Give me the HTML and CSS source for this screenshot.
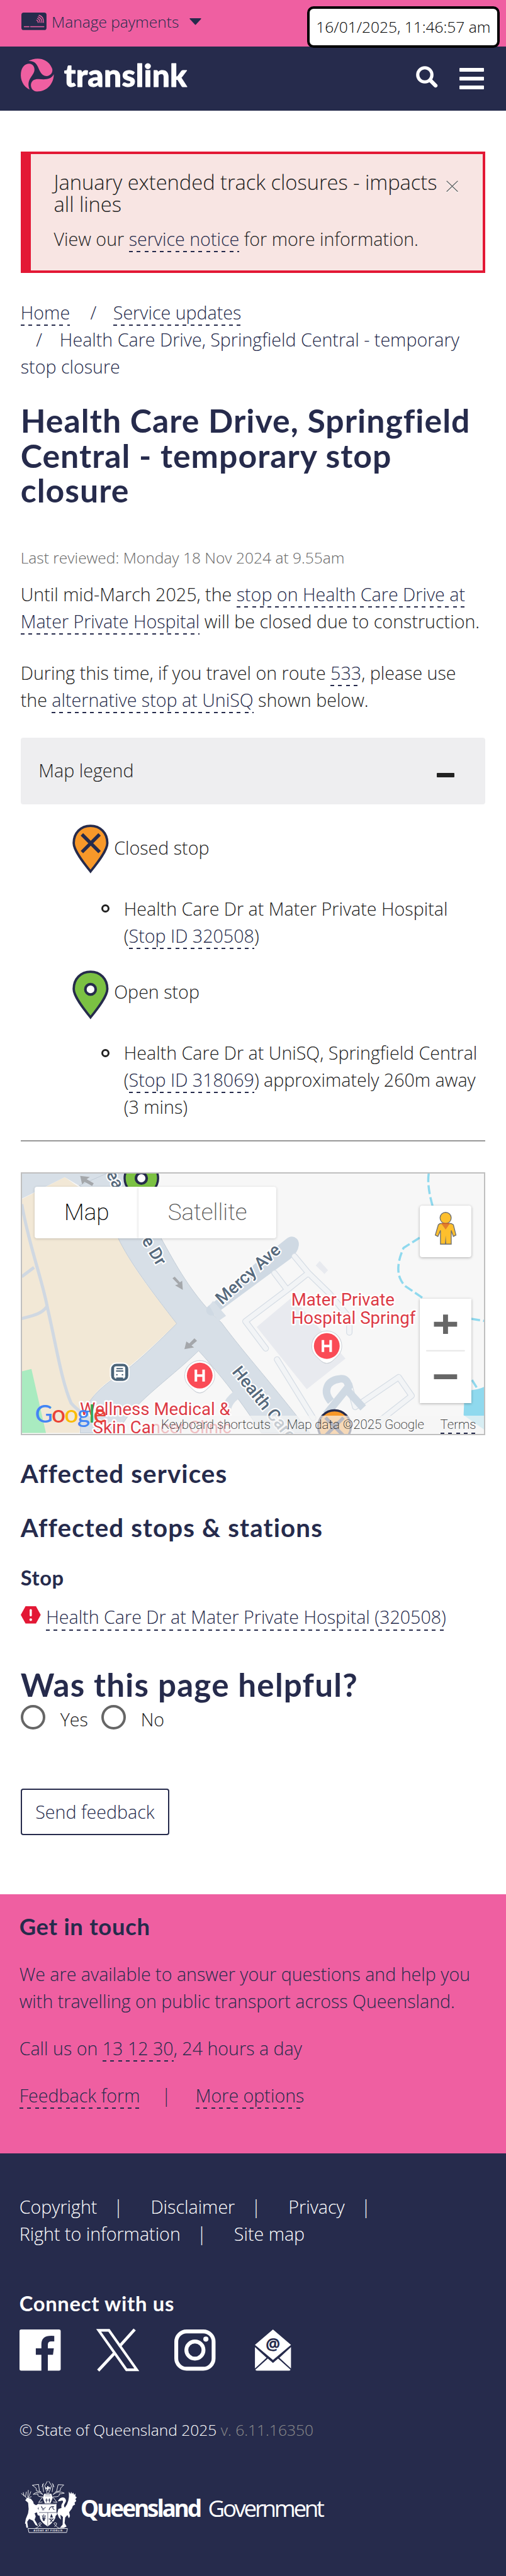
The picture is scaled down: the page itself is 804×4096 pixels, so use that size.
FILE: index.html
```html
<!DOCTYPE html>
<html lang="en">
<head>
<meta charset="utf-8">
<title>Health Care Drive, Springfield Central - temporary stop closure | Translink</title>
<link rel="stylesheet" href="styles.css">
</head>
<body>
<div class="topbar">
  <svg class="card-icon" viewBox="0 0 175 122"><rect width="175" height="122" rx="16" fill="#262b4c"/><g fill="none" stroke="#ef5fa1" stroke-width="6.5" stroke-linecap="round"><path d="M20 99H53M64 99H157"/><path d="M107 53q10 4 10 16M112 41q18 6 18 28M117 30q26 8 26 39M123 19q32 9 31 50"/></g></svg>
  <span class="topbar-text">Manage payments</span>
  <svg class="caret" viewBox="0 0 84 47"><path d="M5 3H79L42 43Z" fill="#262b4c" stroke="#262b4c" stroke-width="7" stroke-linejoin="round"/></svg>
  <div class="clock">16/01/2025, 11:46:57 am</div>
</div>
<header class="header">
  <svg class="logo" viewBox="144 411 1170 232">
    <g fill="#ef5fa1"><path d="M198 429C250 400 330 405 362 478C374 505 352 534 323 534C255 528 285 424 198 429Z"/><path d="M206 629C160 605 140 560 145 512C150 468 175 447 202 447C228 448 244 470 239 498C228 540 180 560 206 629Z"/><path d="M375 521C375 585 330 642 258 642C228 640 213 617 215 592C220 562 242 554 270 555C315 559 355 560 375 521Z"/></g>
    <text class="logo-text" x="446" y="608" textLength="860">translink</text>
  </svg>
  <svg class="search" viewBox="0 0 50 50"><circle cx="20.500" cy="20.500" r="16.500" fill="none" stroke="#fff" stroke-width="7.500"/><path d="M33 33L45.500 45.500" stroke="#fff" stroke-width="9" stroke-linecap="round"/></svg>
  <div class="burger"><i></i><i></i><i></i></div>
</header>

<main class="main">
  <section class="alert">
    <div>
      <p class="alert-title">January extended track closures - impacts<br>all lines</p>
      <p class="alert-body">View our <a>service notice</a> for more information.</p>
    </div>
    <svg class="close" viewBox="0 0 28 28"><path d="M1 3L27 28M27 3L1 28" stroke="#fff" stroke-width="2"/><path d="M1 1L27 26M27 1L1 26" stroke="#666" stroke-width="2"/></svg>
  </section>

  <nav class="crumbs"><a>Home</a><span class="slash">/</span><a>Service updates</a><br><span class="slash slash-first">/</span>Health Care Drive, Springfield Central - temporary<br>stop closure</nav>

  <h1>Health Care Drive, Springfield<br>Central - temporary stop<br>closure</h1>
  <p class="reviewed">Last reviewed: Monday 18 Nov 2024 at 9.55am</p>
  <p class="para">Until mid-March 2025, the <a>stop on Health Care Drive at</a><br><a>Mater Private Hospital</a> will be closed due to construction.</p>
  <p class="para para-second">During this time, if you travel on route <a>533</a>, please use<br>the <a>alternative stop at UniSQ</a> shown below.</p>

  <div class="legend-head"><span>Map legend</span><i class="minus"></i></div>
  <div class="legend">
    <div class="stop">
      <svg class="pin" viewBox="0 0 84 112"><path d="M42 3C19 3 3 20 3 43C3 60 25 88 42 109C59 88 81 60 81 43C81 20 65 3 42 3Z" fill="#f89829" stroke="#262b4c" stroke-width="5.500"/><path d="M22 23L63 64M63 23L22 64" stroke="#262b4c" stroke-width="8"/></svg>
      <span>Closed stop</span>
    </div>
    <div class="detail"><i class="ring"></i><p>Health Care Dr at Mater Private Hospital<br>(<a>Stop ID 320508</a>)</p></div>
    <div class="stop stop-open">
      <svg class="pin" viewBox="0 0 84 112"><path d="M42 3C19 3 3 20 3 43C3 60 25 88 42 109C59 88 81 60 81 43C81 20 65 3 42 3Z" fill="#7bc143" stroke="#262b4c" stroke-width="5.500"/><circle cx="42" cy="44" r="12" fill="#fff" stroke="#262b4c" stroke-width="6"/></svg>
      <span>Open stop</span>
    </div>
    <div class="detail"><i class="ring"></i><p>Health Care Dr at UniSQ, Springfield Central<br>(<a>Stop ID 318069</a>) approximately 260m away<br>(3 mins)</p></div>
  </div>

  <div class="map">
    <svg class="map-art" viewBox="51 37 1077 606" preserveAspectRatio="none">
      <rect x="51" y="37" width="1077" height="606" fill="#f7f7f7"/>
      <g transform="scale(.7519 .43367)">
        <path d="M65 225L200 105L245 160L330 430H365C400 560 450 680 547 892C480 1000 440 1070 380 1150C310 1230 265 1280 245 1480H65Z" fill="#f2e8d6"/>
        <path d="M65 1150L97 1136L142 1480H65Z" fill="#a9ebc0"/>
        <path d="M65 85H400V150H245L200 105L65 222Z" fill="#d7dfe7"/>
        <path d="M330 85H400C440 250 500 440 540 560C600 740 650 830 685 885C760 1060 850 1230 960 1480H810C770 1370 700 1200 615 1038C520 1200 400 1330 365 1480H248C250 1340 290 1250 385 1150C440 1075 490 990 547 892C470 720 400 560 365 430C340 330 300 200 245 150Z" fill="#d7dfe7" stroke="#c2ccd6" stroke-width="1" vector-effect="non-scaling-stroke"/>
        <path d="M700 1390C700 1330 710 1300 740 1265" fill="none" stroke="#d7dfe7" stroke-width="14" vector-effect="non-scaling-stroke"/>
        <path vector-effect="non-scaling-stroke" d="M67 250C90 480 130 650 147 810C175 1020 190 1200 220 1320Q235 1350 260 1380M67 640L105 590M67 865C100 850 130 840 145 800" fill="none" stroke="#d0d8e2" stroke-width="5"/>
        <path vector-effect="non-scaling-stroke" d="M655 820L890 520C915 480 912 445 900 455L795 600" fill="none" stroke="#cfd9e3" stroke-width="17" stroke-linejoin="round" stroke-linecap="round"/>
        <path d="M648 795L675 880L700 850L660 770Z" fill="#d7dfe7"/>
        <path d="M795 910L905 750L1070 1080L950 1245Z" fill="#e8eaef"/>
        <path d="M978 580L990 555L1016 605L1005 625Z" fill="#e8eaef"/>
        <g fill="none" stroke="#d6dde5" stroke-width="10" stroke-linejoin="round" stroke-linecap="round">
          <path vector-effect="non-scaling-stroke" d="M912 530L955 620L1020 730L1082 860V940M955 620L890 710L760 880L823 1025M850 620L885 700M1082 1220L1100 1340L1235 1180L1275 1280L1150 1450M858 1085L970 1400"/></g>
        <g fill="none" stroke="#f2f4f6" stroke-width="7.500" stroke-linejoin="round" stroke-linecap="round">
          <path vector-effect="non-scaling-stroke" d="M912 530L955 620L1020 730L1082 860V940M955 620L890 710L760 880L823 1025M850 620L885 700M1082 1220L1100 1340L1235 1180L1275 1280L1150 1450M858 1085L970 1400"/></g>
        <path vector-effect="non-scaling-stroke" d="M1010 1380L1080 1230Q1075 1180 1050 1190C1010 1200 1000 1260 1025 1310M1070 1240L1125 1345" fill="none" stroke="#cfd9e3" stroke-width="12"/>
        <path vector-effect="non-scaling-stroke" d="M1328 85Q1322 150 1340 260M1300 430L1250 485Q1215 620 1255 690L1310 755M1460 866L1502 878M1462 1195L1480 1245" fill="none" stroke="#8fd9ee" stroke-width="3.500" stroke-dasharray="14 5"/>
        <path d="M1438 1300L1460 1250Q1480 1248 1502 1230V1465Q1450 1400 1436 1384Z" fill="#8fd9ee"/>
        <g fill="#a4a7ab"><path d="M248 98L278 104L268 116L290 138L285 152L262 130L254 144Z"/><path d="M566 711L542 686L552 680L534 648L541 640L557 670L564 662Z"/><path d="M571 1029L577 988L586 999L602 971L610 985L593 1010L601 1020Z"/></g>
      </g>
      <g class="road">
        <text x="246" y="38" transform="rotate(62 246 38)">ea</text>
        <text x="329" y="193" transform="rotate(59 329 193)">e Dr</text>
        <text x="517" y="344" transform="rotate(-42 517 344)">Mercy Ave</text>
        <text x="539" y="500" transform="rotate(51 539 500)">Health Care</text>
      </g>
      <g class="poi">
        <text x="678" y="345.500">Mater Private</text>
        <text x="678" y="387.500">Hospital Springf</text>
        <text x="186" y="600">Wellness Medical &amp;</text>
        <text x="216" y="642">Skin Cancer Clinic</text>
      </g>
      <g id="hospital"><path d="M761 440a35.500 35.500 0 0 1 35 35c0 17-10 24-22 35q-13 11-26 0c-12-11-22-18-22-35a35.500 35.500 0 0 1 35-35Z" fill="#fff" stroke="#cdd2d8" stroke-width="1.500" transform="translate(0 -36)"/><circle cx="761" cy="439" r="30" fill="#fa4b56"/><path d="M752 425V453M770 425V453M752 439H770" stroke="#fff" stroke-width="6"/></g>
      <use href="#hospital" x="-296" y="69"/>
      <rect x="257" y="479" width="43" height="43" rx="14" fill="#4a6378" stroke="#fff" stroke-width="3"/><path d="M270 488h17q3 0 3 3v20h-23v-20q0-3 3-3Z M269 509v6M288 509v6" fill="#fff" stroke="#fff" stroke-width="3"/><path d="M271 492h15M270 497.500h17" stroke="#4a6378" stroke-width="3"/><circle cx="272" cy="506" r="1.800" fill="#4a6378"/><circle cx="285" cy="506" r="1.800" fill="#4a6378"/>
      <circle cx="329" cy="48" r="39" fill="#7bc143" stroke="#262b4c" stroke-width="5"/><circle cx="329" cy="48" r="12.500" fill="#fff" stroke="#262b4c" stroke-width="6"/>
      <circle cx="779" cy="627" r="38" fill="#f89829" stroke="#262b4c" stroke-width="5"/><path d="M758 606L800 648M800 606L758 648" stroke="#262b4c" stroke-width="8"/>
      <text class="google" x="81" y="617" textLength="167"><tspan fill="#4285f4">G</tspan><tspan fill="#ea4335">o</tspan><tspan fill="#fbbc05">o</tspan><tspan fill="#4285f4">g</tspan><tspan fill="#34a853">l</tspan><tspan fill="#ea4335">e</tspan></text>
    </svg>
    <div class="map-type"><span class="type-map">Map</span><span class="type-sat">Satellite</span></div>
    <div class="pegman"><svg viewBox="0 0 50 76"><g fill="#fdbf2d" stroke="#707070" stroke-width="2"><path d="M12 27H38L43 30L49 54L43 57L38 43V75H13V43L7 57L1 54L8 30Z"/><circle cx="25" cy="14" r="13"/></g><path d="M15 27H35L25 41Z" fill="#e27f2c"/><path d="M16 27H34" stroke="#d05a20" stroke-width="2"/><path d="M25 55L23.500 75H26.500Z" fill="#707070"/></svg></div>
    <div class="zoom"><svg viewBox="0 0 120 243"><path d="M33 59.500H87M60 37V82M33 182H87" stroke="#666" stroke-width="11.500" fill="none"/><path d="M15 121.500H105" stroke="#e6e6e6" stroke-width="3"/></svg></div>
    <div class="map-foot"><span>Keyboard shortcuts</span><span>Map data ©2025 Google</span><a>Terms</a></div>
  </div>

  <h2 class="affected">Affected services</h2>
  <h2 class="affected stations">Affected stops &amp; stations</h2>
  <h3>Stop</h3>
  <p class="stop-link"><svg class="warn" viewBox="0 0 46 40"><path d="M11 0H35L46 20L35 40H11L0 20Z" fill="#e31835"/><path d="M23 9V21" stroke="#fff" stroke-width="5" stroke-linecap="round"/><circle cx="23" cy="31" r="3" fill="#fff"/></svg><a>Health Care Dr at Mater Private Hospital (320508)</a></p>

  <h2 class="helpful">Was this page helpful?</h2>
  <div class="radios"><i></i><span>Yes</span><i></i><span>No</span></div>
  <div class="feedback">Send feedback</div>
</main>

<section class="touch">
  <h2>Get in touch</h2>
  <p>We are available to answer your questions and help you<br>with travelling on public transport across Queensland.</p>
  <p>Call us on <a>13 12 30</a>, 24 hours a day</p>
  <p class="touch-links"><a>Feedback form</a><span>|</span><a>More options</a></p>
</section>

<footer class="footer">
  <div class="links"><span>Copyright</span><b>|</b><span>Disclaimer</span><b>|</b><span>Privacy</span><b>|</b></div>
  <div class="links"><span>Right to information</span><b>|</b><span>Site map</span></div>
  <h2>Connect with us</h2>
  <div class="social">
    <svg viewBox="0 0 96 96"><path d="M4 0H92Q96 0 96 4V92Q96 96 92 96H66V59H78L80 44H66V36Q66 28 74 28H81V15Q51 12 51 34V44H38V59H51V96H4Q0 96 0 92V4Q0 0 4 0Z" fill="#fff"/></svg>
    <svg viewBox="0 0 96 96"><path d="M4 2H28L93 94H69Z" fill="none" stroke="#fff" stroke-width="6"/><path d="M88 0L52 40M42 54L3 96" stroke="#fff" stroke-width="7"/></svg>
    <svg viewBox="0 0 96 96"><rect x="4.500" y="4.500" width="87" height="87" rx="24" fill="none" stroke="#fff" stroke-width="9"/><circle cx="48" cy="48" r="20" fill="none" stroke="#fff" stroke-width="9"/><circle cx="73.500" cy="22.500" r="6" fill="#fff"/></svg>
    <svg viewBox="0 0 96 96"><path d="M48 0L90 36L48 71L6 36ZM6 41L33 66L6 91ZM90 41L63 66L90 91ZM36 68L48 78L60 68L89 94Q88 96 86 96H10Q8 96 7 94Z" fill="#fff"/><text class="at" x="48" y="48" text-anchor="middle">@</text></svg>
  </div>
  <p class="copy">© State of Queensland 2025 <span>v. 6.11.16350</span></p>
  <div class="gov">
    <svg class="crest" viewBox="53 38 396 370">
      <g fill="#fff">
        <path d="M84 178L98 160L124 168L140 188L144 204L160 214L176 204L184 218L172 236L186 260L184 288L172 284L166 264L150 270L158 292L150 316L166 342L174 362L156 352L138 322L112 310L98 330L104 372H92L88 346L82 342L88 310L104 270L108 240L104 196Z"/>
        <path d="M314 186Q330 152 360 160Q382 176 362 204Q352 220 364 230Q398 190 392 118L404 134L408 118L416 134L422 124L430 140L438 130L438 150L448 158L438 170L444 184L432 196L436 208L420 218L414 236L394 262L400 290L392 306L382 282L366 300L362 340L376 364L356 374H328L348 350L350 296L332 280L336 316L322 300L310 270L318 240L340 232Q334 212 350 194Q354 176 336 182Z"/>
        <path d="M178 202H304V262L310 276L298 290Q300 320 242 364Q184 326 186 290L178 276Z"/>
        <path d="M218 132H268L278 160L262 200H222L208 160Z"/>
        <path d="M240 78l8 0-1 10 12-4v14l-12-2 1 14h-10l1-14-14 4V86l14 4Z"/>
      </g>
      <g fill="none" stroke="#fff" stroke-width="4"><path d="M240 44L222 76L240 132M250 44L270 76L248 132M206 64L214 120M282 64L274 120M214 58L202 84M274 58L288 84M134 72L160 92L164 112L196 118M134 72L178 66L184 112L208 138M356 70L334 92L330 112L300 118M356 70L316 68L306 112L280 138M208 138Q170 108 140 136L174 134Q166 156 208 154M280 138Q320 108 360 128L324 134Q332 156 280 154M206 156L178 194L206 190M280 156L308 194L280 190"/>
        <path d="M56 130L84 152L96 166M70 122L76 150M92 118L86 154M106 106L102 158M124 116L114 142L104 162M128 152L106 162"/>
        <path d="M104 378H382L376 406H110ZM152 378Q176 374 198 342Q190 330 180 342Q178 352 196 366M332 378Q308 374 286 342Q294 330 306 342Q308 352 290 366"/></g>
      <g fill="none" stroke="#262b4c"><path d="M182 265H302M243 265V360M182 206H300" stroke-width="3"/><path d="M198 220q6 30 30 8M202 246h16M252 248q6-30 32-24q-16 8 6 22M234 166v28M226 177h16M254 166v28M246 177h16M204 284l8 40M215 278v46M226 284l-8 40M204 308h24M258 312l20 22M278 312l-20 22M250 310h36" stroke-width="4.500"/><path d="M226 138h34M222 148h42" stroke-width="2"/></g>
      <path d="M260 300L268 274L280 300Z" fill="#262b4c"/>
      <text class="motto" x="142" y="399" textLength="204">AUDAX AT FIDELIS</text>
    </svg>
    <svg class="gov-name" viewBox="0 0 570 60"><text y="48"><tspan class="qld" textLength="283">Queensland</tspan><tspan class="govt" x="297" textLength="272">Government</tspan></text></svg>
  </div>
</footer>
</body>
</html>
```
FILE: styles.css
```css
/* 1rem is ten layout pixels of the 393px wide mobile page */
html { font-size: 20.458px; }
body { margin: 0; width: 39.3rem; background: #fff; color: #222; font: 300 1.4rem/2.1rem "Open Sans", "Noto Sans", sans-serif; white-space: nowrap; overflow-x: hidden; }
*, *::before { box-sizing: border-box; }
p, h1, h2, h3 { margin: 0; }
svg { display: block; flex: none; overflow: visible; }
a { color: #262b4c; padding-bottom: 2px; background: repeating-linear-gradient(90deg, #262b4c 0 6px, transparent 6px 12.270px) left bottom / 100% 2px no-repeat; }
h1, h2, h3 { color: #262b4c; font-family: Lato, sans-serif; font-weight: 700; }

.topbar { height: 3.6rem; background: #ef5fa1; display: flex; align-items: flex-start; padding: .97rem 0 0 1.64rem; position: relative; color: #262b4c; font-size: 1.2rem; line-height: 1.8rem; }
.card-icon { width: 1.95rem; height: 1.36rem; }
.topbar-text { margin-left: .42rem; margin-top: -.12rem; }
.caret { width: .93rem; height: .52rem; margin: .43rem 0 0 .8rem; }
.clock { position: absolute; top: .5rem; left: 23.85rem; width: 14.95rem; height: 3.2rem; background: #fff; border: .2rem solid #000; border-radius: .5rem; color: #000; font-size: 1.2rem; line-height: 2.8rem; text-align: center; z-index: 2; }

.header { height: 5rem; background: #262b4c; display: flex; align-items: flex-start; padding-left: 1.6rem; }
.logo { width: 13rem; height: 2.58rem; margin-top: .97rem; }
.logo-text { font: 900 218px Lato, sans-serif; fill: #fff; stroke: #fff; stroke-width: 4; stroke-linejoin: round; }
.search { width: 1.67rem; height: 1.67rem; margin: 1.54rem 0 0 17.73rem; }
.burger { width: 1.9rem; margin: 1.66rem 0 0 1.67rem; display: flex; flex-direction: column; gap: .38rem; }
.burger i { height: .31rem; background: #fff; border-radius: 1px; }

.main { padding: 3.2rem 1.6rem 4.63rem; }
.alert { height: 9.4rem; background: #f8e5e3; border: .2rem solid #e31835; border-left-width: .8rem; padding: 1.37rem 1.93rem 0 1.8rem; display: flex; justify-content: space-between; align-items: flex-start; }
.alert-title { font-size: 1.6rem; line-height: 1.7rem; letter-spacing: -.003rem; }
.alert-body { margin-top: .8rem; }
.close { width: .93rem; height: .93rem; margin-top: .65rem; }

.crumbs { margin-top: 2.05rem; color: #262b4c; }
.slash { margin: 0 1.3rem 0 1.58rem; }
.slash-first { margin: 0 1.36rem 0 1.2rem; }
h1 { font-size: 2.53rem; line-height: 2.7rem; margin-top: 1.8rem; letter-spacing: .05rem; }
.reviewed { margin-top: 3.04rem; font-size: 1.2rem; line-height: 1.8rem; color: #666; }
.para { margin-top: .87rem; }
.para-second { margin-top: 1.92rem; }

.legend-head { margin-top: 1.84rem; height: 5.2rem; background: #eeeef0; border-radius: .2rem; padding: 0 2.4rem 0 1.4rem; display: flex; align-items: center; justify-content: space-between; line-height: 2.1rem; }
.minus { width: 1.38rem; height: .34rem; margin-top: .68rem; background: #222; border-radius: 1px; }
.legend { border-bottom: 2px solid #979797; padding: 1.58rem 0 1.54rem 4rem; }
.stop { display: flex; gap: .44rem; }
.stop span { padding-top: .76rem; }
.stop-open { margin-top: 1.62rem; }
.stop-open span { padding-top: .64rem; }
.pin { width: 2.82rem; height: 3.75rem; }
.detail { display: flex; margin-top: 1.74rem; padding-left: 2.25rem; gap: 1.13rem; }
.stop-open + .detail { margin-top: 1.64rem; }
.ring { width: .64rem; height: .64rem; margin-top: .72rem; border: 3px solid #222; border-radius: 50%; }

.map { margin-top: 2.4rem; height: 20.4rem; border: 2px solid #bfbfbf; position: relative; overflow: hidden; font-family: Roboto, sans-serif; }
.map-art { width: 100%; height: 100%; overflow: hidden; }
.road { font: 500 40px Roboto, sans-serif; fill: #56697c; stroke: #fff; stroke-width: 6; paint-order: stroke; }
.poi { font: 400 40.500px Roboto, sans-serif; fill: #dc3a45; stroke: #fff; stroke-width: 7; paint-order: stroke; stroke-linejoin: round; }
.google { font: 500 57px Lato, sans-serif; }
.map-type, .pegman, .zoom, .map-foot { position: absolute; }
.map-type { left: 1rem; top: 1rem; height: 4rem; display: flex; font-size: 1.8rem; line-height: 4rem; font-weight: 200; }
.map-type span { background: #fff; text-align: center; box-shadow: 0 1px 4px rgba(0,0,0,.18); }
.type-map { width: 8.07rem; color: #000; border-radius: .2rem 0 0 .2rem; }
.type-sat { width: 10.7rem; color: #565656; border-radius: 0 .2rem .2rem 0; }
.pegman, .zoom { right: 1rem; width: 4rem; background: #fff; box-shadow: 0 1px 4px rgba(0,0,0,.3); }
.pegman { top: 2.48rem; height: 4rem; border-radius: .2rem; }
.pegman svg { width: 1.67rem; height: 2.54rem; margin: .5rem auto 0; }
.zoom { top: 9.7rem; height: 8.1rem; }
.zoom svg { width: 4rem; height: 8.1rem; }
.map-foot { right: 0; bottom: 0; height: 1.4rem; padding: 0 .62rem 0 .55rem; display: flex; gap: 1.26rem; background: rgba(245,245,245,.7); font-size: 1rem; font-weight: 200; line-height: 1.37rem; }
.map-foot a { height: 1.4rem; color: #222; }

.affected { margin-top: 1.66rem; font-size: 1.97rem; line-height: 2.6rem; letter-spacing: .055rem; }
.stations { margin-top: 1.6rem; }
h3 { margin-top: 1.6rem; font-size: 1.6rem; line-height: 2.1rem; letter-spacing: .03rem; }
.stop-link { margin-top: .94rem; display: flex; align-items: flex-start; height: 2.1rem; }
.stop-link a { height: 2.13rem; }
.warn { width: 1.55rem; height: 1.35rem; margin: .22rem .4rem 0 .03rem; }
.helpful { margin-top: 2.7rem; font-size: 2.5rem; line-height: 3rem; letter-spacing: .06rem; }
.radios { margin-top: .1rem; display: flex; height: 2.1rem; }
.radios i { width: 1.9rem; height: 1.9rem; border: .2rem solid #666; border-radius: 50%; }
.radios span { margin: .1rem 1.02rem 0 1.18rem; }
.feedback { margin-top: 4.39rem; width: 11.56rem; height: 3.6rem; border: 2px solid #262b4c; border-radius: .2rem; color: #262b4c; text-align: center; line-height: 3.4rem; }

.touch { height: 20.11rem; background: #ef5fa1; color: #262b4c; padding: 1.38rem 1.5rem 0; }
.touch h2 { font-size: 1.78rem; line-height: 2.2rem; letter-spacing: .035rem; }
.touch p { margin-top: 1.58rem; }
.touch-links span { margin: 0 1.9rem 0 1.66rem; }

.footer { height: 32.87rem; background: #262b4c; color: #fff; padding: 3.13rem 1.5rem 0; }
.links { display: flex; }
.links b { font-weight: 300; margin: 0 2.13rem 0 1.27rem; }
.footer h2 { margin-top: 3.34rem; font-size: 1.6rem; line-height: 2.1rem; letter-spacing: .035rem; color: #fff; }
.social { margin-top: .94rem; display: flex; gap: 2.83rem; }
.social svg { width: 3.2rem; height: 3.2rem; }
.at { font: 700 38px "Open Sans", sans-serif; fill: #262b4c; }
.copy { margin-top: 3.73rem; font-size: 1.2rem; line-height: 1.8rem; }
.copy span { color: #8b8b8b; }
.gov { margin-top: 3rem; display: flex; padding-left: .13rem; }
.crest { width: 4.37rem; height: 4.07rem; }
.gov-name { width: 19rem; height: 2rem; margin: 1.2rem 0 0 .28rem; }
.qld { font: 700 54px "Noto Sans", sans-serif; fill: #fff; }
.govt { font: 400 54px "Open Sans", sans-serif; fill: #fff; }
.motto { font: 700 17px "Liberation Sans", sans-serif; fill: #fff; }
```
